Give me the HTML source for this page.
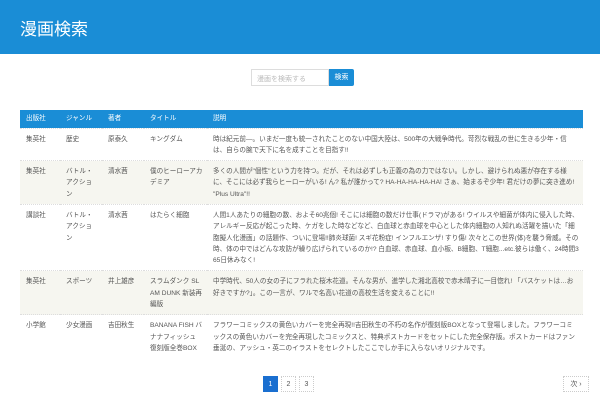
<!DOCTYPE html>
<html><head><meta charset="utf-8"><style>
*{margin:0;padding:0;box-sizing:border-box}
body{width:600px;height:400px;background:#fff;font-family:"Liberation Sans","Noto Sans CJK JP",sans-serif;color:#555;position:relative;overflow:hidden}
.hd{height:54px;background:#1a8dd6;color:#fff;font-size:17px;padding:15px 0 0 20px}
.srch{position:absolute;left:251px;top:69px;display:flex}
.srch .in{width:78px;height:17px;border:1px solid #ddd;font-size:7px;color:#bbb;padding:4px 5px}
.srch .bt{width:25px;height:17px;background:#1a8dd6;color:#fff;font-size:7px;text-align:center;line-height:17px;border-radius:0 2px 2px 0}
table{position:absolute;left:20px;top:110px;width:563px;border-collapse:collapse;table-layout:fixed;font-size:6.6px;line-height:11.3px}
th{background:#1a8dd6;color:#fff;font-weight:normal;text-align:left;height:18px;padding:0 6px;vertical-align:middle}
td{vertical-align:top;padding:5px 4px 4px 6px;border-top:1px dotted #ddd;word-break:break-all}
tr.s td{background:#f6f6f0}
.pg{position:absolute;top:376px;display:flex}
.pg div{width:15px;height:16px;font-size:7px;text-align:center;line-height:16px;border:1px dotted #ccc;margin-right:3px;color:#555}
.pg .a{background:#1a6fd0;color:#fff;border-color:#1a6fd0}
</style></head><body>
<div class="hd">漫画検索</div>
<div class="srch"><div class="in">漫画を検索する</div><div class="bt">検索</div></div>
<table>
<colgroup><col style="width:40px"><col style="width:42px"><col style="width:42px"><col style="width:63px"><col></colgroup>
<tr><th>出版社</th><th>ジャンル</th><th>著者</th><th>タイトル</th><th>説明</th></tr>
<tr><td>集英社</td><td>歴史</td><td>原泰久</td><td>キングダム</td><td>時は紀元前—。いまだ一度も統一されたことのない中国大陸は、500年の大戦争時代。苛烈な戦乱の世に生きる少年・信は、自らの腕で天下に名を成すことを目指す!!</td></tr>
<tr class="s"><td>集英社</td><td>バトル・アクション</td><td>清水茜</td><td>僕のヒーローアカデミア</td><td>多くの人間が"個性"という力を持つ。だが、それは必ずしも正義の為の力ではない。しかし、避けられぬ悪が存在する様に、そこには必ず我らヒーローがいる! ん? 私が誰かって? HA-HA-HA-HA-HA! さぁ、始まるぞ少年! 君だけの夢に突き進め! "Plus Ultra"!!</td></tr>
<tr><td>講談社</td><td>バトル・アクション</td><td>清水茜</td><td>はたらく細胞</td><td>人間1人あたりの細胞の数、およそ60兆個! そこには細胞の数だけ仕事(ドラマ)がある! ウイルスや細菌が体内に侵入した時、アレルギー反応が起こった時、ケガをした時などなど、白血球と赤血球を中心とした体内細胞の人知れぬ活躍を描いた「細胞擬人化漫画」の話題作、ついに登場!!肺炎球菌! スギ花粉症! インフルエンザ! すり傷! 次々とこの世界(体)を襲う脅威。その時、体の中ではどんな攻防が繰り広げられているのか!? 白血球、赤血球、血小板、B細胞、T細胞...etc.彼らは働く、24時間365日休みなく!</td></tr>
<tr class="s"><td>集英社</td><td>スポーツ</td><td>井上雄彦</td><td>スラムダンク SLAM DUNK 新装再編版</td><td>中学時代、50人の女の子にフラれた桜木花道。そんな男が、進学した湘北高校で赤木晴子に一目惚れ! 「バスケットは…お好きですか?」。この一言が、ワルで名高い花道の高校生活を変えることに!!</td></tr>
<tr><td>小学館</td><td>少女漫画</td><td>吉田秋生</td><td>BANANA FISH バナナフィッシュ 復刻版全巻BOX</td><td>フラワーコミックスの黄色いカバーを完全再現!!吉田秋生の不朽の名作が復刻版BOXとなって登場しました。フラワーコミックスの黄色いカバーを完全再現したコミックスと、特典ポストカードをセットにした完全保存版。ポストカードはファン垂涎の、アッシュ・英二のイラストをセレクトしたここでしか手に入らないオリジナルです。</td></tr>
</table>
<div class="pg" style="left:263px"><div class="a">1</div><div>2</div><div>3</div></div>
<div class="pg" style="left:563px"><div style="width:26px">次 ›</div></div>
</body></html>
